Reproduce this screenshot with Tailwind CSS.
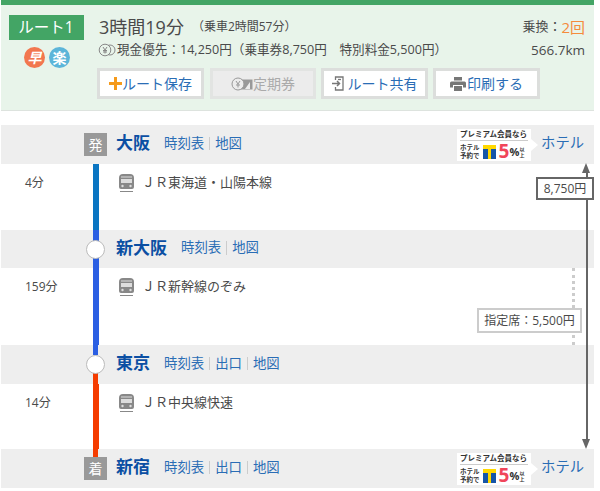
<!DOCTYPE html>
<html lang="ja">

<head>
  <meta charset="UTF-8">
  <title>ルート1</title>
  <script src="https://cdn.jsdelivr.net/npm/@tailwindcss/browser@4"></script>
</head>

<body class="bg-white font-['Open_Sans','Noto_Sans_CJK_JP',sans-serif] text-[#4a4a4a]">
  <div class="relative ml-px w-[593px]">

    <!-- ルート概要 -->
    <header class="flex h-[111px] border-t-[5px] border-b border-[#43a565] border-b-[#dde3de] bg-[#e8f4ea]">
      <div class="flex w-[98px] shrink-0 flex-col items-center pl-[7px] pr-[15px] pt-[10px]">
        <div class="flex h-[25px] w-[75px] items-center justify-center bg-[#43a565] text-[15.500px] text-white">ルート1</div>
        <div class="ml-[2px] mt-[7px] flex gap-[4px]">
          <span class="flex h-[21px] w-[21px] items-center justify-center rounded-full bg-[#f2774f] text-[14px] font-bold italic leading-none text-white">早</span>
          <span class="flex h-[21px] w-[21px] items-center justify-center rounded-full bg-[#5cb5d9] text-[14px] font-bold leading-none text-white">楽</span>
        </div>
      </div>
      <div class="min-w-0 flex-1">
        <div class="flex items-start justify-between pr-[9px] pt-[9px]">
          <div>
            <p class="flex h-[26px] items-center text-[18px]">3時間19分<span class="ml-[8px] text-[12px]">（乗車2時間57分）</span></p>
            <p class="mt-px flex h-[18px] items-center text-[12.600px]">
              <svg class="-ml-px mr-px h-[14px] w-[18px]" viewBox="0 0 17 14" fill="none" stroke="#888" stroke-width="1">
                <circle cx="11.500" cy="7" r="5" />
                <circle cx="6.500" cy="7" r="5.800" fill="#e8f4ea" />
                <path d="M4.500 4l2 3 2-3M6.500 7v3.500M4.500 7.500h4M4.500 9h4" />
              </svg>
              現金優先：14,250円（乗車券8,750円　特別料金5,500円）
            </p>
          </div>
          <div class="text-right text-[13px]">
            <p class="flex h-[26px] items-center justify-end">乗換：<span class="text-[15px] text-[#f58b3c]">2回</span></p>
            <p class="mt-px flex h-[18px] items-center justify-end text-[13.500px]">566.7km</p>
          </div>
        </div>
        <!-- ボタン -->
        <div class="-ml-[2px] mt-[9px] flex text-[14px] text-[#2a6db5]">
          <a class="flex h-[31px] w-[107px] items-center justify-center border-[3px] border-[#dcdedc] bg-white">
            <svg class="h-[13px] w-[13px]" viewBox="0 0 13 13" fill="#f59a1b"><path d="M5 0h3v5h5v3H8v5H5V8H0V5h5z" /></svg>
            ルート保存
          </a>
          <a class="ml-[6px] flex h-[31px] w-[106px] items-center justify-center border-[3px] border-[#e2e4e2] bg-[#ececec] text-[#aaa]">
            <svg class="h-[14px] w-[22px]" viewBox="0 0 22 14" fill="none" stroke="#999">
              <rect x="7.500" y="2.500" width="14" height="10" fill="#999" stroke="none" />
              <path d="M14 12l5-7v7z" fill="#ececec" stroke="none" />
              <circle cx="7" cy="7" r="6" fill="#ececec" />
              <path d="M5 4l2 3 2-3M7 7v3.500M5 8h4" />
            </svg>
            定期券
          </a>
          <a class="ml-[5px] flex h-[31px] w-[107px] items-center justify-center border-[3px] border-[#dcdedc] bg-white">
            <svg class="mr-[2px] h-[15px] w-[14px]" viewBox="0 0 14 15" fill="none" stroke="#777" stroke-width="1.300">
              <path d="M3.500 4V1h7.500v13H3.500v-3" />
              <path d="M0 7.500h7M5 5l2.500 2.500L5 10" stroke-width="1.500" />
              <path d="M9 3.500h-3" />
            </svg>
            ルート共有
          </a>
          <a class="ml-[5px] flex h-[31px] w-[107px] items-center justify-center border-[3px] border-[#dcdedc] bg-white">
            <svg class="mr-px h-[14px] w-[16px]" viewBox="0 0 16 14" fill="#777">
              <path d="M4 0h8v3.500H4zM1.500 4.500h13a1.500 1.500 0 0 1 1.500 1.500v4.500h-3V8H3v2.500H0V6a1.500 1.500 0 0 1 1.500-1.500z" />
              <path d="M4 9h8v5H4z" />
            </svg>
            印刷する
          </a>
        </div>
      </div>
    </header>

    <!-- 経路 -->
    <section class="mt-[14px]">
      <!-- 大阪 -->
      <div class="flex h-[39px] items-center bg-[#eeeeee]">
        <div class="flex w-[83px] shrink-0"></div>
        <span class="flex h-[23px] w-[23px] shrink-0 items-center justify-center bg-[#999] text-[14px] leading-none text-white">発</span>
        <h2 class="mb-[3px] ml-[9px] text-[17px] font-bold text-[#0b4fa3]">大阪</h2>
        <nav class="mb-[2px] ml-[14px] flex items-center text-[13.400px] leading-none text-[#2a6db5]">
          <a class="border-r border-[#ccc] pr-[5px]">時刻表</a><a class="pl-[5px]">地図</a>
        </nav>
        <div class="ml-auto mr-[10px] flex items-center">
          <div class="flex h-[32px] w-[74px] flex-col bg-white px-[3px] pt-[2px] font-bold leading-none text-[#333]">
            <p class="whitespace-nowrap border-b border-[#ccc] pb-[2px] text-[7.500px]">プレミアム会員なら</p>
            <div class="mt-px flex items-center">
              <p class="text-[6.500px] leading-[8px]">ホテル<br>予約で</p>
              <span class="relative ml-[3px] h-[14px] w-[13px] bg-[#1656a8]">
                <span class="absolute inset-x-0 top-0 h-[4px] bg-[#ffd800]"></span>
                <span class="absolute inset-y-0 left-[5px] w-[3px] bg-[#ffd800]"></span>
              </span>
              <span class="ml-[3px] text-[19px] leading-none text-[#f0455a]">5</span><span class="text-[11px] leading-none">%</span><span class="text-[5px] leading-[6px]">以<br>上</span>
            </div>
          </div>
          <span class="h-0 w-0 border-y-[6px] border-l-[7px] border-y-transparent border-l-white"></span>
          <a class="mb-[3px] ml-[3px] text-[14.300px] text-[#2a6db5]">ホテル</a>
        </div>
      </div>

      <!-- JR東海道・山陽本線 -->
      <div class="flex h-[66px]">
        <p class="w-[83px] shrink-0 pl-[24px] pt-[10px] text-[12px]">4分</p>
        <div class="relative w-[23px] shrink-0"><span class="absolute inset-y-0 left-[9px] w-[6px] bg-[#0a75c2]"></span></div>
        <div class="ml-[12px] flex h-[38px] items-center text-[13px]">
          <svg class="mr-[8px] h-[18px] w-[15px]" viewBox="0 0 15 18" fill="#888">
            <path d="M4 0h7a4 4 0 0 1 4 4v9a2 2 0 0 1-2 2H2a2 2 0 0 1-2-2V4a4 4 0 0 1 4-4z" />
            <path d="M2 2.500h11v1H2zM2 5h11v4H2z" fill="#ddd" />
            <circle cx="3.500" cy="12" r="1.200" fill="#ddd" /><circle cx="11.500" cy="12" r="1.200" fill="#ddd" />
            <path d="M1 17h13v1H1z" />
          </svg>
          ＪＲ東海道・山陽本線
        </div>
      </div>

      <!-- 新大阪 -->
      <div class="flex h-[38px] items-center bg-[#eeeeee]">
        <div class="w-[83px] shrink-0"></div>
        <div class="relative h-full w-[23px] shrink-0">
          <span class="absolute inset-y-0 left-[9px] w-[6px] bg-[#2b5fe3]"></span>
          <span class="absolute left-[2px] top-[10px] h-[19px] w-[19px] rounded-full border border-[#bbb] bg-white"></span>
        </div>
        <h2 class="mb-[3px] ml-[9px] text-[17px] font-bold text-[#0b4fa3]">新大阪</h2>
        <nav class="mb-[2px] ml-[14px] flex items-center text-[13.400px] leading-none text-[#2a6db5]">
          <a class="border-r border-[#ccc] pr-[5px]">時刻表</a><a class="pl-[5px]">地図</a>
        </nav>
      </div>

      <!-- JR新幹線のぞみ -->
      <div class="relative flex h-[77px]">
        <p class="w-[83px] shrink-0 pl-[24px] pt-[10px] text-[12px]">159分</p>
        <div class="relative w-[23px] shrink-0"><span class="absolute inset-y-0 left-[9px] w-[6px] bg-[#2b5fe3]"></span></div>
        <div class="ml-[12px] flex h-[38px] items-center text-[13px]">
          <svg class="mr-[8px] h-[18px] w-[15px]" viewBox="0 0 15 18" fill="#888">
            <path d="M4 0h7a4 4 0 0 1 4 4v9a2 2 0 0 1-2 2H2a2 2 0 0 1-2-2V4a4 4 0 0 1 4-4z" />
            <path d="M2 2.500h11v1H2zM2 5h11v4H2z" fill="#ddd" />
            <circle cx="3.500" cy="12" r="1.200" fill="#ddd" /><circle cx="11.500" cy="12" r="1.200" fill="#ddd" />
            <path d="M1 17h13v1H1z" />
          </svg>
          ＪＲ新幹線のぞみ
        </div>
        <!-- 指定席料金 -->
        <span class="absolute inset-y-0 left-[571px] border-l-[3px] border-dotted border-[#ccc]"></span>
        <span class="absolute left-[476px] top-[40px] flex h-[25px] w-[105px] items-center justify-center whitespace-nowrap border-2 border-[#ccc] bg-white text-[12px]">指定席：5,500円</span>
      </div>

      <!-- 東京 -->
      <div class="flex h-[39px] items-center bg-[#eeeeee]">
        <div class="w-[83px] shrink-0"></div>
        <div class="relative h-full w-[23px] shrink-0">
          <span class="absolute inset-x-[9px] top-0 h-[10px] bg-[#2b5fe3]"></span>
          <span class="absolute inset-x-[9px] bottom-0 h-[20px] bg-[#f53c00]"></span>
          <span class="absolute left-[2px] top-[10px] h-[19px] w-[19px] rounded-full border border-[#bbb] bg-white"></span>
        </div>
        <h2 class="mb-[3px] ml-[9px] text-[17px] font-bold text-[#0b4fa3]">東京</h2>
        <nav class="mb-[2px] ml-[14px] flex items-center text-[13.400px] leading-none text-[#2a6db5]">
          <a class="border-r border-[#ccc] pr-[5px]">時刻表</a><a class="border-r border-[#ccc] px-[5px]">出口</a><a class="pl-[5px]">地図</a>
        </nav>
      </div>

      <!-- JR中央線快速 -->
      <div class="flex h-[65px]">
        <p class="w-[83px] shrink-0 pl-[24px] pt-[10px] text-[12px]">14分</p>
        <div class="relative w-[23px] shrink-0"><span class="absolute inset-y-0 left-[9px] w-[6px] bg-[#f53c00]"></span></div>
        <div class="ml-[12px] flex h-[38px] items-center text-[13px]">
          <svg class="mr-[8px] h-[18px] w-[15px]" viewBox="0 0 15 18" fill="#888">
            <path d="M4 0h7a4 4 0 0 1 4 4v9a2 2 0 0 1-2 2H2a2 2 0 0 1-2-2V4a4 4 0 0 1 4-4z" />
            <path d="M2 2.500h11v1H2zM2 5h11v4H2z" fill="#ddd" />
            <circle cx="3.500" cy="12" r="1.200" fill="#ddd" /><circle cx="11.500" cy="12" r="1.200" fill="#ddd" />
            <path d="M1 17h13v1H1z" />
          </svg>
          ＪＲ中央線快速
        </div>
      </div>

      <!-- 新宿 -->
      <div class="flex h-[39px] items-center bg-[#eeeeee]">
        <div class="w-[83px] shrink-0"></div>
        <div class="relative h-full w-[23px] shrink-0">
          <span class="absolute inset-x-[9px] top-0 h-[8px] bg-[#f53c00]"></span>
          <span class="absolute inset-x-0 top-[8px] flex h-[23px] items-center justify-center bg-[#999] text-[14px] leading-none text-white">着</span>
        </div>
        <h2 class="mb-[3px] ml-[9px] text-[17px] font-bold text-[#0b4fa3]">新宿</h2>
        <nav class="mb-[2px] ml-[14px] flex items-center text-[13.400px] leading-none text-[#2a6db5]">
          <a class="border-r border-[#ccc] pr-[5px]">時刻表</a><a class="border-r border-[#ccc] px-[5px]">出口</a><a class="pl-[5px]">地図</a>
        </nav>
        <div class="ml-auto mr-[10px] flex items-center">
          <div class="flex h-[32px] w-[74px] flex-col bg-white px-[3px] pt-[2px] font-bold leading-none text-[#333]">
            <p class="whitespace-nowrap border-b border-[#ccc] pb-[2px] text-[7.500px]">プレミアム会員なら</p>
            <div class="mt-px flex items-center">
              <p class="text-[6.500px] leading-[8px]">ホテル<br>予約で</p>
              <span class="relative ml-[3px] h-[14px] w-[13px] bg-[#1656a8]">
                <span class="absolute inset-x-0 top-0 h-[4px] bg-[#ffd800]"></span>
                <span class="absolute inset-y-0 left-[5px] w-[3px] bg-[#ffd800]"></span>
              </span>
              <span class="ml-[3px] text-[19px] leading-none text-[#f0455a]">5</span><span class="text-[11px] leading-none">%</span><span class="text-[5px] leading-[6px]">以<br>上</span>
            </div>
          </div>
          <span class="h-0 w-0 border-y-[6px] border-l-[7px] border-y-transparent border-l-white"></span>
          <a class="mb-[3px] ml-[3px] text-[14.300px] text-[#2a6db5]">ホテル</a>
        </div>
      </div>
    </section>

    <!-- 乗車券の区間矢印 -->
    <div class="absolute left-[581px] top-[163px] h-[286px] w-[9px]">
      <span class="absolute left-0 top-0 h-0 w-0 border-x-[4.500px] border-b-[10px] border-x-transparent border-b-[#666]"></span>
      <span class="absolute bottom-[10px] left-[4px] top-[10px] w-[2px] bg-[#666]"></span>
      <span class="absolute bottom-0 left-0 h-0 w-0 border-x-[4.500px] border-t-[10px] border-x-transparent border-t-[#666]"></span>
    </div>
    <span class="absolute left-[535px] top-[177px] flex h-[23px] w-[58px] items-center justify-center border-2 border-[#666] bg-white text-[12px]">8,750円</span>
  </div>
</body>

</html>
